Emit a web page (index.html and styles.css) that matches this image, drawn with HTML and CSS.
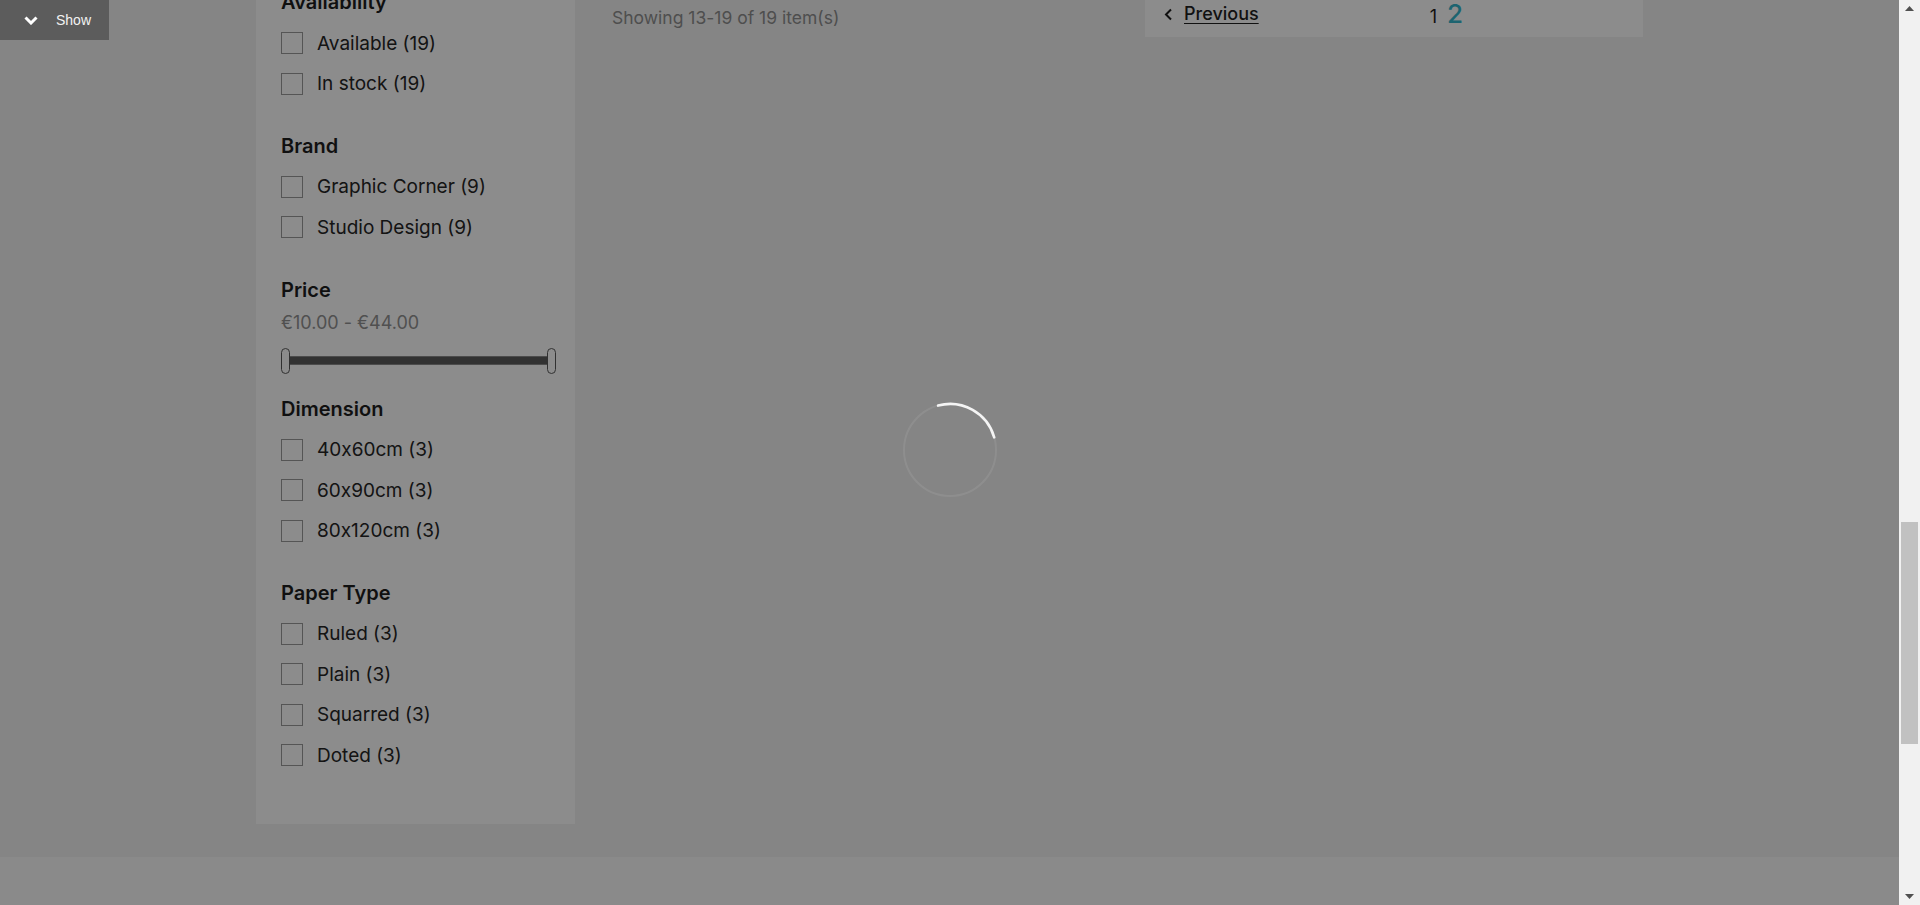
FILE: index.html
```html
<!DOCTYPE html>
<html lang="en">
<head>
<meta charset="utf-8">
<title>Catalog</title>
<link rel="stylesheet" href="styles.css">
</head>
<body>
<div class="viewport">
  <div class="page">
    <main class="content">
      <div class="container">
        <aside class="filters">
          <section class="facet">
            <h4 class="facet-title">Availability</h4>
            <ul class="facet-list">
              <li class="facet-item"><span class="checkbox"></span><span>Available (19)</span></li>
              <li class="facet-item"><span class="checkbox"></span><span>In stock (19)</span></li>
            </ul>
          </section>
          <section class="facet">
            <h4 class="facet-title">Brand</h4>
            <ul class="facet-list">
              <li class="facet-item"><span class="checkbox"></span><span>Graphic Corner (9)</span></li>
              <li class="facet-item"><span class="checkbox"></span><span>Studio Design (9)</span></li>
            </ul>
          </section>
          <section class="facet facet--price">
            <h4 class="facet-title">Price</h4>
            <p class="price-range">€10.00 - €44.00</p>
            <div class="slider">
              <span class="slider-handle"></span>
              <span class="slider-track"></span>
              <span class="slider-handle"></span>
            </div>
          </section>
          <section class="facet">
            <h4 class="facet-title">Dimension</h4>
            <ul class="facet-list">
              <li class="facet-item"><span class="checkbox"></span><span>40x60cm (3)</span></li>
              <li class="facet-item"><span class="checkbox"></span><span>60x90cm (3)</span></li>
              <li class="facet-item"><span class="checkbox"></span><span>80x120cm (3)</span></li>
            </ul>
          </section>
          <section class="facet">
            <h4 class="facet-title">Paper Type</h4>
            <ul class="facet-list">
              <li class="facet-item"><span class="checkbox"></span><span>Ruled (3)</span></li>
              <li class="facet-item"><span class="checkbox"></span><span>Plain (3)</span></li>
              <li class="facet-item"><span class="checkbox"></span><span>Squarred (3)</span></li>
              <li class="facet-item"><span class="checkbox"></span><span>Doted (3)</span></li>
            </ul>
          </section>
        </aside>
        <div class="products">
          <div class="products-top">
            <p class="showing">Showing 13-19 of 19 item(s)</p>
            <nav class="pagination">
              <a class="page-prev" href="#">
                <svg class="prev-icon" width="9" height="13" viewBox="0 0 9 13"><path d="M7 1.5 L2 6.5 L7 11.5" fill="none" stroke="#1f1f1f" stroke-width="2"/></svg>
                <span class="prev-text">Previous</span>
              </a>
              <ul class="page-list">
                <li class="page-num">1</li>
                <li class="page-num current">2</li>
              </ul>
            </nav>
          </div>
        </div>
      </div>
    </main>
    <footer class="footer"></footer>
    <div class="overlay">
      <svg class="spinner" width="96" height="96" viewBox="0 0 96 96">
        <circle cx="48" cy="48" r="46" fill="none" stroke="rgba(255,255,255,0.08)" stroke-width="2"/>
        <path d="M36.1 3.6 A46 46 0 0 1 92.2 35.3" fill="none" stroke="#f4f4f4" stroke-width="2.6" stroke-linecap="round"/>
      </svg>
    </div>
  </div>
  <div class="scrollbar">
    <div class="sb-btn"><svg width="9" height="5" viewBox="0 0 9 5"><path d="M0 5 L4.5 0 L9 5 Z" fill="#505050"/></svg></div>
    <div class="sb-track"><div class="sb-thumb"></div></div>
    <div class="sb-btn"><svg width="9" height="5" viewBox="0 0 9 5"><path d="M0 0 L4.5 5 L9 0 Z" fill="#505050"/></svg></div>
  </div>
</div>
<button class="show-toggle" type="button">
  <svg width="14" height="9" viewBox="0 0 14 9"><path d="M1.5 1.5 L7 7 L12.5 1.5" fill="none" stroke="#ffffff" stroke-width="3"/></svg>
  <span>Show</span>
</button>
</body>
</html>
```
FILE: styles.css
```css
* { box-sizing: border-box; }
html, body { margin: 0; padding: 0; height: 100%; }
body {
  font-family: Inter, "Noto Sans", sans-serif;
  font-feature-settings: "calt" 0;
  overflow: hidden;
  background: #f1f1f1;
}
.viewport { display: flex; height: 905px; }
.page {
  flex: 1;
  position: relative;
  overflow: hidden;
  background: #f3f3f3;
  display: flex;
  flex-direction: column;
}
.content { margin-top: -40px; }
.container {
  width: 1387px;
  margin: 0 auto;
  display: grid;
  grid-template-columns: 319px 1fr;
  column-gap: 17px;
  align-items: start;
}
.filters { background: #ffffff; padding: 30px 25px 19px; }
.facet { margin-bottom: 30px; }
.facet--price { margin-bottom: 23px; }
.facet-title {
  margin: 0 0 9px;
  font-size: 20px;
  line-height: 24px;
  font-weight: 600;
  color: #1e1e1e;
}
.facet-list { list-style: none; margin: 0; padding: 0; }
.facet-item {
  height: 40.4px;
  display: flex;
  align-items: center;
  gap: 14px;
  font-size: 19px;
  color: #262626;
}
.checkbox {
  flex: none;
  width: 22px;
  height: 22px;
  border: 1px solid #9c9c9c;
  background: #ffffff;
}
.price-range {
  margin: 0;
  font-size: 18px;
  line-height: 24px;
  color: #929292;
}
.slider {
  margin-top: 13px;
  width: 275px;
  height: 26px;
  display: flex;
  align-items: center;
}
.slider-track {
  flex: 1;
  height: 9px;
  background: #5c5c5c;
  border-top: 1px solid #8a8a8a;
  border-bottom: 1px solid #8a8a8a;
}
.slider-handle {
  flex: none;
  width: 9px;
  height: 26px;
  border: 1px solid #5a5a5a;
  border-radius: 5px;
  background: #ffffff;
}
.products-top {
  display: flex;
  justify-content: space-between;
  align-items: flex-end;
}
.showing {
  margin: 0;
  padding: 0 0 7px 20px;
  font-size: 17.5px;
  line-height: 24px;
  color: #8f8f8f;
}
.pagination {
  width: 498px;
  background: #ffffff;
  padding: 41px 19px 10px;
  display: flex;
  align-items: center;
}
.page-prev {
  display: flex;
  align-items: center;
  gap: 11px;
  color: #1f1f1f;
  text-decoration: none;
  font-size: 18px;
  line-height: 26px;
  font-weight: 500;
}
.prev-text { text-decoration: underline; text-underline-offset: 3px; }
.page-list {
  list-style: none;
  margin: 0 0 0 171px;
  padding: 0;
  display: flex;
  align-items: baseline;
  gap: 10px;
  height: 26px;
}
.page-num { font-size: 18px; line-height: 26px; color: #1f1f1f; }
.page-num.current { font-size: 26px; line-height: 26px; font-weight: 500; color: #35b6cc; }
.footer { margin-top: 33px; flex: 1; background: #fcfcfc; }
.overlay {
  position: absolute;
  inset: 0;
  background: rgba(0, 0, 0, 0.45);
  display: flex;
  align-items: center;
  justify-content: center;
}
.spinner { margin-top: -5px; }
.scrollbar {
  width: 21px;
  flex: none;
  background: #f1f1f1;
  display: flex;
  flex-direction: column;
}
.sb-btn {
  height: 17px;
  display: flex;
  align-items: center;
  justify-content: center;
}
.sb-track { flex: 1; padding: 0 2px; }
.sb-thumb { margin-top: 505px; height: 222px; background: #c1c1c1; }
.show-toggle {
  position: fixed;
  top: 0;
  left: 0;
  width: 109px;
  height: 40px;
  border: 0;
  margin: 0;
  padding: 0 0 0 24px;
  background: #5c5c5c;
  color: #f2f2f2;
  font-family: "Liberation Sans", Arial, sans-serif;
  font-size: 14px;
  display: flex;
  align-items: center;
  gap: 18px;
}
```
